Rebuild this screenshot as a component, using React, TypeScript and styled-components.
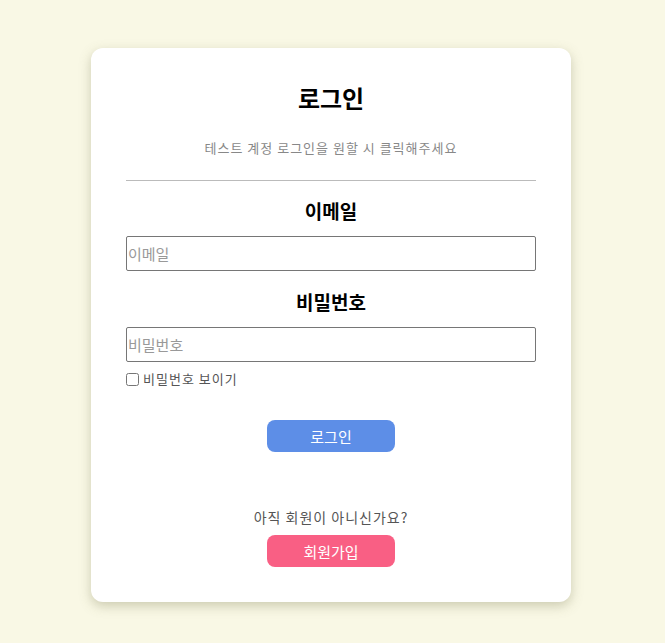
import React from "react";
import styled, { createGlobalStyle } from "styled-components";

const Global = createGlobalStyle`
  html, body { margin: 0; padding: 0; }
  body {
    background: #f9f8e5;
    font-family: "Noto Sans CJK KR", "Noto Sans", sans-serif;
    min-height: 643px;
  }
`;

const Page = styled.div`
  display: flex;
  justify-content: center;
  padding-top: 48px;
  padding-right: 3px;
`;

const Card = styled.div`
  width: 480px;
  box-sizing: border-box;
  background: #fff;
  border-radius: 12px;
  box-shadow: 0 4px 12px rgba(120, 120, 80, 0.35);
  padding: 30px 35px 35px;
  display: flex;
  flex-direction: column;
  align-items: stretch;
`;

const Title = styled.h1`
  margin: 0;
  text-align: center;
  font-size: 24px;
  font-weight: 700;
  line-height: 40px;
  color: #000;
`;

const Sub = styled.p`
  margin: 20px 0 0;
  text-align: center;
  font-size: 13px;
  line-height: 20px;
  letter-spacing: 1px;
  color: #888;
  cursor: pointer;
`;

const Divider = styled.hr`
  margin: 22px 0 0;
  border: none;
  border-top: 1px solid #bbb;
`;

const Label = styled.label<{ $top: number }>`
  display: block;
  margin-top: ${(p) => p.$top}px;
  text-align: center;
  font-size: 19px;
  font-weight: 700;
  line-height: 28px;
  color: #000;
`;

const Input = styled.input`
  margin-top: 11px;
  width: 100%;
  height: 35px;
  box-sizing: border-box;
  border: 1px solid #767676;
  border-radius: 2px;
  padding: 0 1px;
  font-family: inherit;
  font-size: 15px;
  outline: none;
  &::placeholder { color: #999; }
`;

const CheckRow = styled.label`
  margin-top: 8px;
  display: flex;
  align-items: center;
  gap: 4px;
  font-size: 13px;
  line-height: 18px;
  letter-spacing: 1px;
  color: #555;
`;

const Check = styled.input`
  margin: 0;
  width: 13px;
  height: 13px;
`;

const Button = styled.button<{ $bg: string; $top: number }>`
  align-self: center;
  margin-top: ${(p) => p.$top}px;
  width: 128px;
  height: 32px;
  border: none;
  border-radius: 8px;
  background: ${(p) => p.$bg};
  color: #fff;
  font-family: inherit;
  font-size: 15px;
  cursor: pointer;
`;

const Ask = styled.p`
  margin: 55px 0 0;
  text-align: center;
  font-size: 14px;
  line-height: 20px;
  letter-spacing: 1px;
  color: #555;
`;

export default function App() {
  return (
    <>
      <Global />
      <Page>
        <Card>
          <Title>로그인</Title>
          <Sub>테스트 계정 로그인을 원할 시 클릭해주세요</Sub>
          <Divider />
          <Label $top={16} htmlFor="email">이메일</Label>
          <Input id="email" placeholder="이메일" />
          <Label $top={17} htmlFor="pw">비밀번호</Label>
          <Input id="pw" type="password" placeholder="비밀번호" />
          <CheckRow>
            <Check type="checkbox" />
            비밀번호 보이기
          </CheckRow>
          <Button $bg="#5d8ee7" $top={32}>로그인</Button>
          <Ask>아직 회원이 아니신가요?</Ask>
          <Button $bg="#f95f84" $top={8}>회원가입</Button>
        </Card>
      </Page>
    </>
  );
}
